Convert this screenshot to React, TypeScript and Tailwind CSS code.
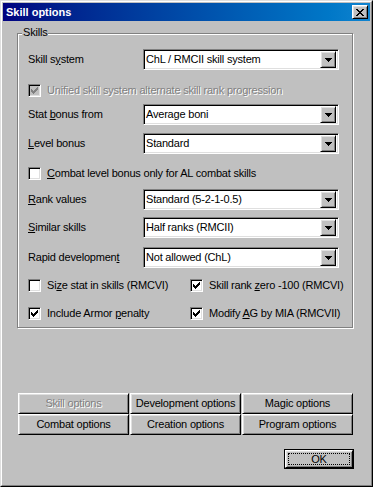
import React from "react";

const F = { fontFamily: '"Liberation Sans", Arial, sans-serif' };

function Pix({ rows, color, className }: { rows: string[]; color: string; className?: string }) {
  const w = rows[0].length;
  const h = rows.length;
  const rects: React.ReactElement[] = [];
  rows.forEach((r, y) => {
    for (let x = 0; x < r.length; x++) {
      if (r[x] === "X") rects.push(<rect key={`${x}-${y}`} x={x} y={y} width={1} height={1} fill={color} />);
    }
  });
  return (
    <svg width={w} height={h} viewBox={`0 0 ${w} ${h}`} shapeRendering="crispEdges" className={className}>
      {rects}
    </svg>
  );
}

const CLOSE = ["XX....XX", ".XX..XX.", "..XXXX..", "...XX...", "..XXXX..", ".XX..XX.", "XX....XX"];
const CHECK = ["......X", ".....XX", "X...XXX", "XX.XXX.", "XXXXX..", ".XXX...", "..X...."];
const ARROW = ["XXXXXXX", ".XXXXX.", "..XXX..", "...X..."];

const raised =
  "border border-t-white border-l-white border-r-black border-b-black shadow-[inset_1px_1px_0_#dfdfdf,inset_-1px_-1px_0_#808080]";
const sunken =
  "border border-t-[#808080] border-l-[#808080] border-r-white border-b-white shadow-[inset_1px_1px_0_#000,inset_-1px_-1px_0_#dfdfdf]";

const txt = "text-[11px] leading-none tracking-[-0.2px] whitespace-nowrap";

function Combo({ value }: { value: string }) {
  return (
    <div className={`w-[196px] h-[21px] bg-white flex items-center ${sunken} pl-[2px] pr-[2px]`}>
      <span className={`flex-1 text-black ${txt}`}>{value}</span>
      <div className={`w-[16px] h-[17px] bg-[#c0c0c0] flex items-center justify-center ${raised}`}>
        <Pix rows={ARROW} color="#000" />
      </div>
    </div>
  );
}

function ComboRow({ label, value, mt }: { label: React.ReactNode; value: string; mt: string }) {
  return (
    <div className={`flex items-center h-[21px] ${mt}`}>
      <div className={`w-[115px] text-black ${txt}`}>{label}</div>
      <Combo value={value} />
    </div>
  );
}

function Check({ checked, disabled, label, w }: { checked: boolean; disabled?: boolean; label: React.ReactNode; w?: string }) {
  return (
    <div className={`flex items-center h-[13px] ${w ?? ""}`}>
      <div className={`w-[13px] h-[13px] shrink-0 flex items-center justify-center ${sunken} ${disabled ? "bg-[#c0c0c0]" : "bg-white"}`}>
        {checked && <Pix rows={CHECK} color={disabled ? "#808080" : "#000"} />}
      </div>
      <span
        className={`ml-[6px] ${txt} ${
          disabled ? "text-[#808080] [text-shadow:1px_1px_0_#fff]" : "text-black"
        }`}
      >
        {label}
      </span>
    </div>
  );
}

function Btn({ children, disabled }: { children: React.ReactNode; disabled?: boolean }) {
  return (
    <div className={`h-[21px] flex items-center justify-center bg-[#c0c0c0] ${raised}`}>
      <span
        className={`${txt} ${
          disabled ? "text-[#808080] [text-shadow:1px_1px_0_#fff]" : "text-black"
        }`}
      >
        {children}
      </span>
    </div>
  );
}

export default function App() {
  return (
    <div style={F} className="w-[373px] h-[487px] bg-[#c0c0c0] border border-t-[#dfdfdf] border-l-[#dfdfdf] border-r-black border-b-black">
      <div className="w-full h-full border border-t-white border-l-white border-r-[#808080] border-b-[#808080] p-[1px] flex flex-col">
        {/* Title bar */}
        <div className="h-[18px] flex items-center bg-linear-to-r from-[#000080] to-[#1084d0] pl-[3px] pr-[2px]">
          <span className="flex-1 text-white font-bold text-[11px] leading-none">Skill options</span>
          <div className={`w-[16px] h-[14px] bg-[#c0c0c0] flex items-center justify-center ${raised}`}>
            <Pix rows={CLOSE} color="#000" />
          </div>
        </div>

        {/* Body */}
        <div className="pl-[14px] flex flex-col w-[351px]">
          {/* Group box */}
          <div className="relative mt-[12px] w-[336px] h-[295px] border border-[#808080] shadow-[1px_1px_0_#fff,inset_1px_1px_0_#fff] pt-[15px] pl-[10px] flex flex-col">
            <span className={`absolute left-[4px] top-[-7px] px-[1px] bg-[#c0c0c0] text-black ${txt}`}>Skills</span>

            <ComboRow mt="" label={<>Skill s<u>y</u>stem</>} value="ChL / RMCII skill system" />
            <div className="mt-[14px]">
              <Check checked disabled label="Unified skill system alternate skill rank progression" />
            </div>
            <ComboRow mt="mt-[7px]" label={<>Stat <u>b</u>onus from</>} value="Average boni" />
            <ComboRow mt="mt-[8px]" label={<><u>L</u>evel bonus</>} value="Standard" />
            <div className="mt-[13px]">
              <Check checked={false} label={<><u>C</u>ombat level bonus only for AL combat skills</>} />
            </div>
            <ComboRow mt="mt-[9px]" label={<><u>R</u>ank values</>} value="Standard (5-2-1-0.5)" />
            <ComboRow mt="mt-[7px]" label={<><u>S</u>imilar skills</>} value="Half ranks (RMCII)" />
            <ComboRow mt="mt-[9px]" label={<>Rapid developmen<u>t</u></>} value="Not allowed (ChL)" />
            <div className="mt-[11px] flex">
              <Check w="w-[162px]" checked={false} label={<>Si<u>z</u>e stat in skills (RMCVI)</>} />
              <Check checked label={<>Skill rank <u>z</u>ero -100 (RMCVI)</>} />
            </div>
            <div className="mt-[15px] flex">
              <Check w="w-[162px]" checked label={<>Include Armor <u>p</u>enalty</>} />
              <Check checked label={<>Modify <u>A</u>G by MIA (RMCVII)</>} />
            </div>
          </div>

          {/* Page buttons */}
          <div className="mt-[65px] ml-[1px] grid grid-cols-[111px_111px_111px] gap-x-[1px] gap-y-[0px]">
            <Btn disabled>Skill options</Btn>
            <Btn>Development options</Btn>
            <Btn>Magic options</Btn>
            <Btn>Combat options</Btn>
            <Btn>Creation options</Btn>
            <Btn>Program options</Btn>
          </div>

          {/* OK */}
          <div className="mt-[14px] w-[337px] flex justify-end">
            <div className="w-[70px] h-[20px] border border-black">
              <div className={`w-full h-full bg-[#c0c0c0] flex items-center justify-center ${raised} p-[2px]`}>
                <div className="w-full h-full border border-dotted border-black flex items-center justify-center">
                  <span className={`text-black ${txt}`}>OK</span>
                </div>
              </div>
            </div>
          </div>
        </div>
      </div>
    </div>
  );
}
